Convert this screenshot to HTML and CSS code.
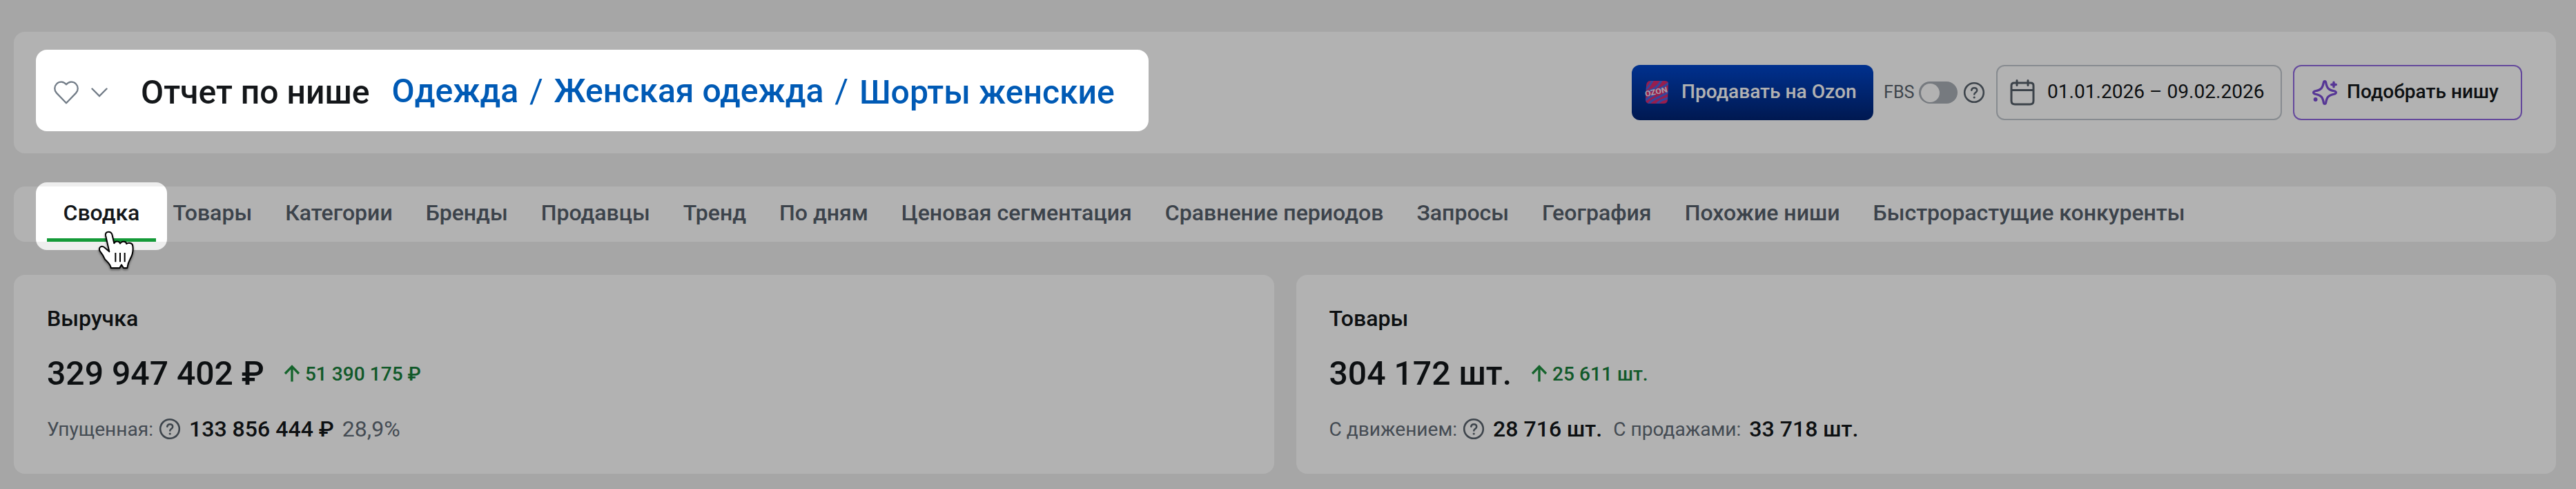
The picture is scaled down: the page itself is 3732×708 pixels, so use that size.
FILE: index.html
```html
<!DOCTYPE html>
<html lang="ru">
<head>
<meta charset="utf-8">
<title>Отчет по нише</title>
<link rel="stylesheet" href="styles.css">
</head>
<body>
<svg class="defs" width="0" height="0" aria-hidden="true">
  <symbol id="help" viewBox="0 0 32 32">
    <g fill="none" stroke="currentColor" stroke-width="2.6" stroke-linecap="round">
      <circle cx="16" cy="16" r="13.8"/>
      <path d="M12.2 12.6c.5-2.200 2.100-3.300 4-3.300 2.300 0 4 1.400 4 3.600 0 2.900-3.900 3.100-3.900 5.600"/>
    </g>
    <circle cx="16.2" cy="23" r="1.600" fill="currentColor"/>
  </symbol>
  <symbol id="up" viewBox="0 0 28 28">
    <path d="M14 25.500V4M4 14 14 3.700 24 14" fill="none" stroke="currentColor" stroke-width="3.300"/>
  </symbol>
</svg>

<main class="page">
  <header class="panel header">
    <div class="fav">
      <svg class="heart" viewBox="0 0 36 34"><path d="M18 32.300 3.900 17.600C.3 13.800.5 8 4 4.500 7.800.6 14.300.6 18 5.400 21.700.6 28.200.6 32 4.500 35.500 8 35.700 13.800 32.100 17.600Z" fill="none" stroke="currentColor" stroke-width="2.300" stroke-linejoin="round"/></svg>
      <svg class="chevron" viewBox="0 0 24 14"><path d="M1.500 1.500 12 12 22.500 1.500" fill="none" stroke="currentColor" stroke-width="2.400" stroke-linecap="round"/></svg>
    </div>
    <h1 class="title">Отчет по нише</h1>
    <nav class="crumbs">
      <a class="crumb">Одежда</a><span class="slash">/</span><a class="crumb">Женская одежда</a><span class="slash">/</span><a class="crumb crumb-last">Шорты женские</a>
    </nav>
    <div class="tools">
      <button class="btn btn-ozon">
        <svg class="ozon" viewBox="0 0 36 36">
          <clipPath id="oz"><path d="M9 1h21q6 0 5 6l-1 22q-.5 5-6 5H8q-6 0-6-6L3 8q.5-7 6-7Z"/></clipPath>
          <g clip-path="url(#oz)">
            <path d="M0 0h36v36H0z" fill="#d82c70"/>
            <path d="M-2 15C7 13 9 4 14-2M6 16C17 13 22 6 26-1M22 13C29 10 32 6 38 3M-1 31C5 26 8 24 15 21M5 37C9 28 19 27 36 17M17 37C21 30 27 28 37 25" fill="none" stroke="#4c64e0" stroke-width="3.200"/>
          </g>
          <text class="ozon-word" x="17.500" y="20.500" transform="rotate(-12 18 18)" text-anchor="middle" textLength="33" lengthAdjust="spacingAndGlyphs">OZON</text>
        </svg>
        <span>Продавать на Ozon</span>
      </button>
      <div class="fbs">
        <span class="fbs-label">FBS</span>
        <span class="toggle"></span>
        <svg class="help"><use href="#help"/></svg>
      </div>
      <div class="btn btn-date">
        <svg class="cal" viewBox="0 0 36 38"><path d="M6 5H30Q34 5 34 9V31Q34 36 29 36H7Q2 36 2 31V9Q2 5 6 5ZM2 15.500H34M10 1.500V8.500M26 1.500V8.500" fill="none" stroke="currentColor" stroke-width="3" stroke-linecap="round"/></svg>
        <span>01.01.2026 – 09.02.2026</span>
      </div>
      <button class="btn btn-pick">
        <svg class="spark" viewBox="0 0 36 36">
          <path d="M18 1.600C19 1.600 19.500 2.600 19.700 3.600 21 11 23 14 31.500 15.800 33.200 16.200 34.400 17 34.400 18S33.200 19.800 31.500 20.200C23 22 21 25 19.700 32.400 19.500 33.400 19 34.400 18 34.400S16.500 33.400 16.300 32.400C15 25 13 22 4.500 20.200 2.800 19.800 1.600 19 1.600 18S2.800 16.200 4.500 15.800C13 14 15 11 16.300 3.600 16.500 2.600 17 1.600 18 1.600Z" fill="none" stroke="currentColor" stroke-width="3.200" stroke-linejoin="round"/>
          <path d="M31 3.200v6.600M27.700 6.500h6.600" stroke="currentColor" stroke-width="3.400" stroke-linecap="round"/>
          <circle cx="4.600" cy="28" r="2.900" fill="currentColor"/>
        </svg>
        <span>Подобрать нишу</span>
      </button>
    </div>
  </header>

  <nav class="panel tabs">
    <a class="tab tab-active">Сводка</a>
    <a class="tab">Товары</a>
    <a class="tab">Категории</a>
    <a class="tab">Бренды</a>
    <a class="tab">Продавцы</a>
    <a class="tab">Тренд</a>
    <a class="tab">По дням</a>
    <a class="tab">Ценовая сегментация</a>
    <a class="tab">Сравнение периодов</a>
    <a class="tab">Запросы</a>
    <a class="tab">География</a>
    <a class="tab">Похожие ниши</a>
    <a class="tab">Быстрорастущие конкуренты</a>
  </nav>

  <section class="cards">
    <article class="panel card">
      <h2 class="card-title">Выручка</h2>
      <div class="main-row">
        <span class="value">329 947 402 ₽</span>
        <svg class="up"><use href="#up"/></svg>
        <span class="delta">51 390 175 ₽</span>
      </div>
      <div class="sub-row">
        <span class="muted">Упущенная:</span>
        <svg class="help"><use href="#help"/></svg>
        <span class="strong">133 856 444 ₽</span>
        <span class="percent">28,9%</span>
      </div>
    </article>
    <article class="panel card">
      <h2 class="card-title">Товары</h2>
      <div class="main-row">
        <span class="value">304 172 шт.</span>
        <svg class="up"><use href="#up"/></svg>
        <span class="delta">25 611 шт.</span>
      </div>
      <div class="sub-row">
        <span class="muted">С движением:</span>
        <svg class="help"><use href="#help"/></svg>
        <span class="strong">28 716 шт.</span>
        <span class="muted muted-next">С продажами:</span>
        <span class="strong">33 718 шт.</span>
      </div>
    </article>
  </section>
</main>

<!-- Dimming layer with two highlighted areas -->
<svg class="dim" viewBox="0 0 3732 708">
  <path fill-rule="evenodd" d="M0 0H3732V708H0ZM68 72H1648a16 16 0 0 1 16 16V174a16 16 0 0 1-16 16H68a16 16 0 0 1-16-16V88a16 16 0 0 1 16-16ZM68 264H226a16 16 0 0 1 16 16V346a16 16 0 0 1-16 16H68a16 16 0 0 1-16-16V280a16 16 0 0 1 16-16Z"/>
</svg>

<svg class="cursor" viewBox="270 36 180 186">
  <path d="M309 62C306 43 334 41 338 62L346 97C352 85 370 87 372 98 378 86 398 86 400 99 408 92 427 95 427 109 430 130 425 149 416 164 408 178 405 188 403 204L387 204 378 190 370 204 332 204C332 190 320 180 306 166 300 152 292 140 284 130 276 114 292 105 303 114L325 133Z" fill="#fff" stroke="#000" stroke-width="6" stroke-linejoin="round"/>
  <path d="M352 138V178M372 138V178M392 138V178" stroke="#000" stroke-width="6"/>
</svg>
</body>
</html>
```
FILE: styles.css
```css
* { box-sizing: border-box; }

body {
  margin: 0;
  width: 3732px;
  height: 708px;
  overflow: hidden;
  position: relative;
  background: #eeeeee;
  font-family: Roboto, "Noto Sans", sans-serif;
  font-weight: 500;
  color: #14171a;
}

svg { display: block; flex: none; }
.defs { position: absolute; }

.page {
  padding: 46px 29px 0 20px;
  display: flex;
  flex-direction: column;
  gap: 48px;
}

.panel { background: #fff; border-radius: 16px; }

.header {
  height: 176px;
  padding: 0 49px 0 58px;
  display: flex;
  align-items: center;
  white-space: nowrap;
}

.fav {
  display: flex;
  align-items: center;
  gap: 18px;
  width: 126px;
  color: #727c87;
}
.heart { width: 36px; height: 34px; }
.chevron { width: 24px; height: 14px; }

.title {
  margin: 0;
  font-size: 48.100px;
  font-weight: 500;
  line-height: 60px;
}

.crumbs {
  display: flex;
  align-items: center;
  gap: 15.800px;
  margin-left: 32px;
  padding-bottom: 4px;
  font-size: 48.100px;
  line-height: 60px;
  color: #005ab5;
}
.slash { font-weight: 400; }
.crumb-last { padding-top: 4px; }

.tools {
  margin-left: auto;
  display: flex;
  align-items: center;
}

.btn {
  height: 80px;
  display: flex;
  align-items: center;
  border: 0;
  border-radius: 12px;
  background: none;
  font: 500 28.100px/33px Roboto, sans-serif;
  color: inherit;
  text-align: left;
  white-space: nowrap;
}
.btn span { padding-bottom: 3px; }

.btn-ozon {
  width: 350px;
  padding: 0 0 0 18px;
  gap: 18px;
  background: linear-gradient(#0046cc, #002474);
  color: #fff;
}
.ozon { width: 36px; height: 36px; }
.ozon-word { font: 700 11px Roboto, sans-serif; fill: #f0e4f4; }

.fbs {
  width: 147px;
  margin: 0 16px 0 15px;
  display: flex;
  align-items: center;
  color: #59636e;
}
.fbs-label { font-size: 25.200px; font-weight: 400; line-height: 30px; width: 51px; padding-bottom: 1px; }
.toggle {
  width: 56px;
  height: 32px;
  border-radius: 16px;
  background: #a9afb6;
  padding: 2.500px;
}
.toggle::before {
  content: "";
  display: block;
  width: 27px;
  height: 27px;
  border-radius: 50%;
  background: #fff;
}
.help { width: 32px; height: 32px; }
.fbs .help { margin-left: 8px; }

.btn-date {
  width: 414px;
  padding: 0 0 0 18px;
  gap: 18px;
  border: 2px solid #c2c8ce;
  font-weight: 400;
}
.cal { width: 36px; height: 38px; color: #56606b; }

.btn-pick {
  width: 332px;
  margin-left: 16px;
  padding: 0 0 0 26px;
  gap: 14px;
  border: 2px solid #9068e0;
}
.spark { width: 36px; height: 36px; color: #7c4ed6; }

.tabs {
  height: 80px;
  padding-left: 47.500px;
  display: flex;
}
.tab {
  padding: 19px 24px 0;
  font-size: 32.050px;
  line-height: 38px;
  white-space: nowrap;
  color: #56606c;
}
.tab-active { color: #14171a; border-bottom: 5px solid #149a38; }

.cards {
  display: grid;
  grid-template-columns: 1fr 1fr;
  gap: 32px;
}
.card {
  height: 288px;
  padding: 44px 48px 0;
  white-space: nowrap;
}
.card-title {
  margin: 0;
  font-size: 32.100px;
  font-weight: 500;
  line-height: 38px;
}
.main-row {
  display: flex;
  align-items: center;
  height: 56px;
  margin-top: 33px;
}
.value { font-size: 48.100px; line-height: 56px; }
.up { width: 28px; height: 28px; margin-left: 26px; color: #1f9040; }
.delta { margin-left: 5px; font-size: 28.100px; line-height: 33px; color: #18803c; }
.sub-row {
  display: flex;
  align-items: center;
  height: 40px;
  margin-top: 32px;
}
.sub-row .help { margin-left: 8px; color: #59636e; }
.muted { font-size: 28.100px; font-weight: 400; line-height: 33px; color: #626c77; }
.muted-next { margin-left: 16px; }
.strong { margin-left: 12px; font-size: 32.050px; line-height: 38px; }
.percent { margin-left: 12px; font-size: 32.050px; font-weight: 400; line-height: 38px; color: #626c77; }

.dim {
  position: absolute;
  left: 0;
  top: 0;
  width: 3732px;
  height: 708px;
  fill: rgba(0, 0, 0, 0.3);
}

.cursor {
  position: absolute;
  left: 140px;
  top: 332px;
  width: 60px;
  height: 62px;
  filter: drop-shadow(0 2px 1.500px rgba(0, 0, 0, 0.45));
}
```
